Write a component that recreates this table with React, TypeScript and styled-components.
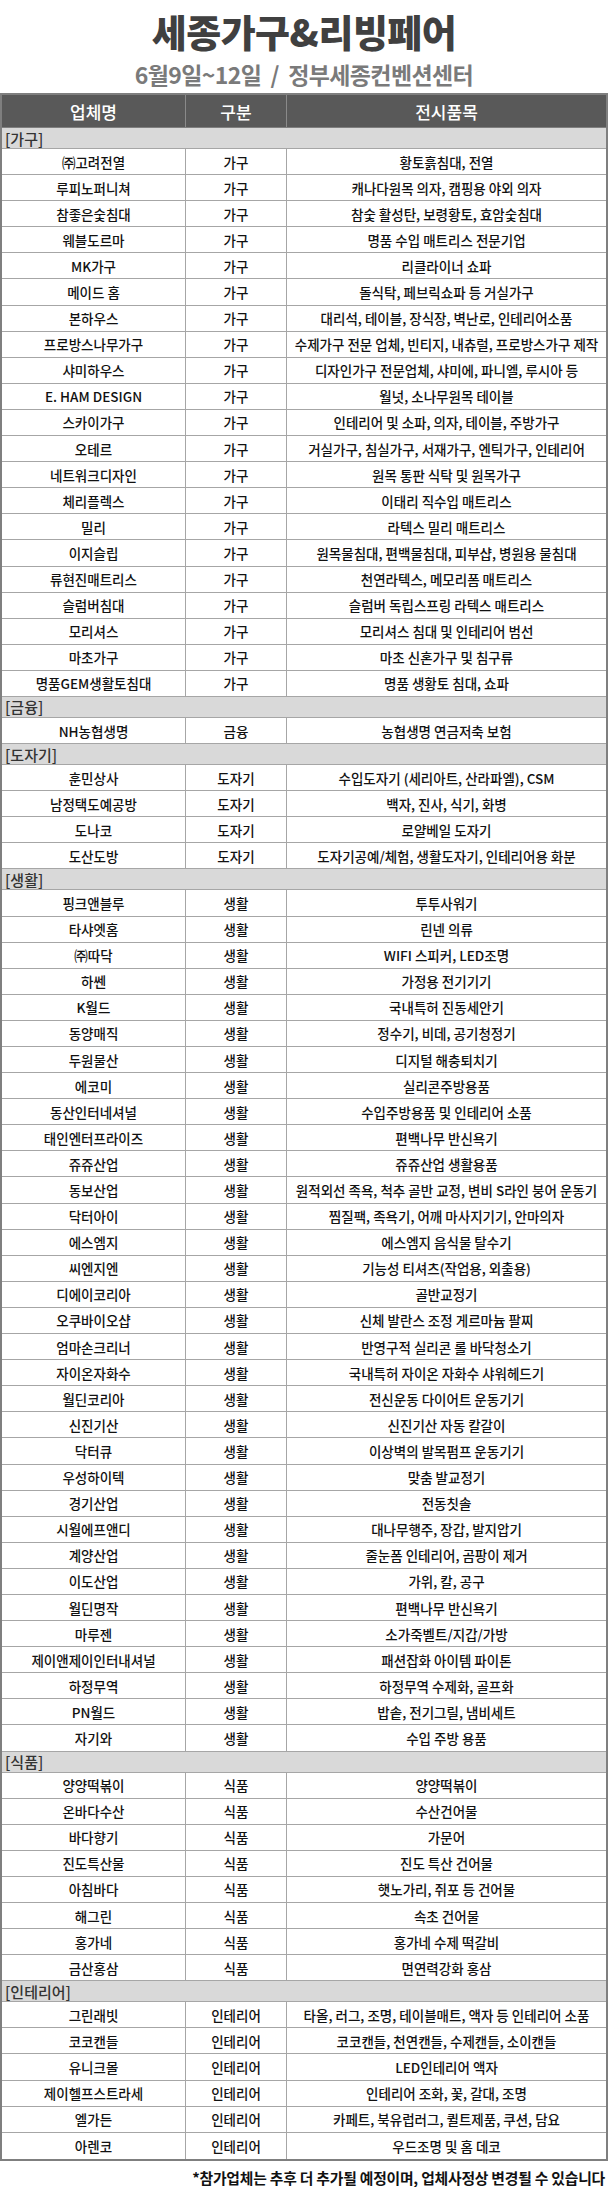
import React from "react";
import styled, {createGlobalStyle} from "styled-components";

const LINE = "#a6a6a6";

const sections: {name: string; rows: [string, string][]}[] = [
    {
        name: "가구",
        rows: [
            ["㈜고려전열", "황토흙침대, 전열"],
            ["루피노퍼니쳐", "캐나다원목 의자, 캠핑용 야외 의자"],
            ["참좋은숯침대", "참숯 활성탄, 보령황토, 효암숯침대"],
            ["웨블도르마", "명품 수입 매트리스 전문기업"],
            ["MK가구", "리클라이너 쇼파"],
            ["메이드 홈", "돌식탁, 페브릭쇼파 등 거실가구"],
            ["본하우스", "대리석, 테이블, 장식장, 벽난로, 인테리어소품"],
            ["프로방스나무가구", "수제가구 전문 업체, 빈티지, 내츄럴, 프로방스가구 제작"],
            ["샤미하우스", "디자인가구 전문업체, 샤미에, 파니엘, 루시아 등"],
            ["E. HAM DESIGN", "월넛, 소나무원목 테이블"],
            ["스카이가구", "인테리어 및 소파, 의자, 테이블, 주방가구"],
            ["오테르", "거실가구, 침실가구, 서재가구, 엔틱가구, 인테리어"],
            ["네트워크디자인", "원목 통판 식탁 및 원목가구"],
            ["체리플렉스", "이태리 직수입 매트리스"],
            ["밀리", "라텍스 밀리 매트리스"],
            ["이지슬립", "원목물침대, 편백물침대, 피부샵, 병원용 물침대"],
            ["류현진매트리스", "천연라텍스, 메모리폼 매트리스"],
            ["슬럼버침대", "슬럼버 독립스프링 라텍스 매트리스"],
            ["모리셔스", "모리셔스 침대 및 인테리어 범선"],
            ["마초가구", "마초 신혼가구 및 침구류"],
            ["명품GEM생활토침대", "명품 생황토 침대, 쇼파"],
        ],
    },
    {
        name: "금융",
        rows: [["NH농협생명", "농협생명 연금저축 보험"]],
    },
    {
        name: "도자기",
        rows: [
            ["훈민상사", "수입도자기 (세리아트, 산라파엘), CSM"],
            ["남정택도예공방", "백자, 진사, 식기, 화병"],
            ["도나코", "로얄베일 도자기"],
            ["도산도방", "도자기공예/체험, 생활도자기, 인테리어용 화분"],
        ],
    },
    {
        name: "생활",
        rows: [
            ["핑크앤블루", "투투사워기"],
            ["타샤엣홈", "린넨 의류"],
            ["㈜따닥", "WIFI 스피커, LED조명"],
            ["하쎈", "가정용 전기기기"],
            ["K월드", "국내특허 진동세안기"],
            ["동양매직", "정수기, 비데, 공기청정기"],
            ["두원물산", "디지털 해충퇴치기"],
            ["에코미", "실리콘주방용품"],
            ["동산인터네셔널", "수입주방용품 및 인테리어 소품"],
            ["태인엔터프라이즈", "편백나무 반신욕기"],
            ["쥬쥬산업", "쥬쥬산업 생활용품"],
            ["동보산업", "원적외선 족욕, 척추 골반 교정, 변비 S라인 붕어 운동기"],
            ["닥터아이", "찜질팩, 족욕기, 어깨 마사지기기, 안마의자"],
            ["에스엠지", "에스엠지 음식물 탈수기"],
            ["씨엔지엔", "기능성 티셔츠(작업용, 외출용)"],
            ["디에이코리아", "골반교정기"],
            ["오쿠바이오샵", "신체 발란스 조정 게르마늄 팔찌"],
            ["엄마손크리너", "반영구적 실리콘 롤 바닥청소기"],
            ["자이온자화수", "국내특허 자이온 자화수 샤워헤드기"],
            ["월딘코리아", "전신운동 다이어트 운동기기"],
            ["신진기산", "신진기산 자동 칼갈이"],
            ["닥터큐", "이상벽의 발목펌프 운동기기"],
            ["우성하이텍", "맞춤 발교정기"],
            ["경기산업", "전동칫솔"],
            ["시월에프앤디", "대나무행주, 장갑, 발지압기"],
            ["계양산업", "줄눈폼 인테리어, 곰팡이 제거"],
            ["이도산업", "가위, 칼, 공구"],
            ["월딘명작", "편백나무 반신욕기"],
            ["마루젠", "소가죽벨트/지갑/가방"],
            ["제이앤제이인터내셔널", "패션잡화 아이템 파이톤"],
            ["하정무역", "하정무역 수제화, 골프화"],
            ["PN월드", "밥솥, 전기그릴, 냄비세트"],
            ["자기와", "수입 주방 용품"],
        ],
    },
    {
        name: "식품",
        rows: [
            ["양양떡볶이", "양양떡볶이"],
            ["온바다수산", "수산건어물"],
            ["바다향기", "가문어"],
            ["진도특산물", "진도 특산 건어물"],
            ["아침바다", "햇노가리, 쥐포 등 건어물"],
            ["해그린", "속초 건어물"],
            ["홍가네", "홍가네 수제 떡갈비"],
            ["금산홍삼", "면연력강화 홍삼"],
        ],
    },
    {
        name: "인테리어",
        rows: [
            ["그린래빗", "타올, 러그, 조명, 테이블매트, 액자 등 인테리어 소품"],
            ["코코캔들", "코코캔들, 천연캔들, 수제캔들, 소이캔들"],
            ["유니크몰", "LED인테리어 액자"],
            ["제이헬프스트라세", "인테리어 조화, 꽃, 갈대, 조명"],
            ["엘가든", "카페트, 북유럽러그, 퀼트제품, 쿠션, 담요"],
            ["아렌코", "우드조명 및 홈 데코"],
        ],
    },
];

const GlobalStyle = createGlobalStyle`
  html, body {
    margin: 0;
    padding: 0;
    background: #ffffff;
  }
  body {
    font-family: "Noto Sans CJK KR", "Noto Sans", sans-serif;
    color: #111111;
  }
`;

const Page = styled.div`
  width: 608px;
  padding-top: 10px;
`;

const Title = styled.h1`
  margin: 0;
  text-align: center;
  font-size: 38px;
  line-height: 42px;
  font-weight: 900;
  color: #404040;
  letter-spacing: -0.5px;
`;

const Subtitle = styled.h2`
  margin: 8px 0 0;
  text-align: center;
  font-size: 23px;
  line-height: 28px;
  font-weight: 700;
  color: #7a7a7a;
  letter-spacing: -0.6px;
  white-space: pre;
`;

const Table = styled.div`
  margin-top: 5px;
  border: 2px solid #7f7f7f;
`;

const Row = styled.div`
  display: grid;
  grid-template-columns: 184px 101px 1fr;
  box-sizing: border-box;
  height: 26.1px;
  border-bottom: 1px solid ${LINE};

  &:last-child {
    border-bottom: 0;
  }
`;

const HeaderRow = styled(Row)`
  height: 33px;
  background: #595959;
  border-bottom-color: #7f7f7f;
`;

const Cell = styled.div`
  display: flex;
  align-items: center;
  justify-content: center;
  border-right: 1px solid ${LINE};
  font-size: 13.5px;
  font-weight: 500;
  white-space: nowrap;

  &:last-child {
    border-right: 0;
  }
`;

const HeadCell = styled(Cell)`
  color: #ffffff;
  font-size: 17px;
  font-weight: 500;
  border-right-color: #8a8a8a;
`;

const CategoryRow = styled.div`
  box-sizing: border-box;
  height: 21px;
  padding-left: 3px;
  display: flex;
  align-items: center;
  background: #d9d9d9;
  border-bottom: 1px solid ${LINE};
  font-size: 15px;
  font-weight: 500;
  color: #333333;
`;

const Note = styled.p`
  margin: 7px 0 0;
  padding-right: 3px;
  text-align: right;
  font-size: 14.8px;
  line-height: 20px;
  font-weight: 700;
  color: #111111;
  letter-spacing: -0.2px;
`;

const App = () => {
    return (
        <Page>
            <GlobalStyle/>
            <Title>세종가구&amp;리빙페어</Title>
            <Subtitle>6월9일~12일  /  정부세종컨벤션센터</Subtitle>
            <Table>
                <HeaderRow>
                    <HeadCell>업체명</HeadCell>
                    <HeadCell>구분</HeadCell>
                    <HeadCell>전시품목</HeadCell>
                </HeaderRow>
                {sections.map(section => (
                    <React.Fragment key={section.name}>
                        <CategoryRow>[{section.name}]</CategoryRow>
                        {section.rows.map(([company, items]) => (
                            <Row key={company}>
                                <Cell>{company}</Cell>
                                <Cell>{section.name}</Cell>
                                <Cell>{items}</Cell>
                            </Row>
                        ))}
                    </React.Fragment>
                ))}
            </Table>
            <Note>*참가업체는 추후 더 추가될 예정이며, 업체사정상 변경될 수 있습니다</Note>
        </Page>
    );
};

export default App;
